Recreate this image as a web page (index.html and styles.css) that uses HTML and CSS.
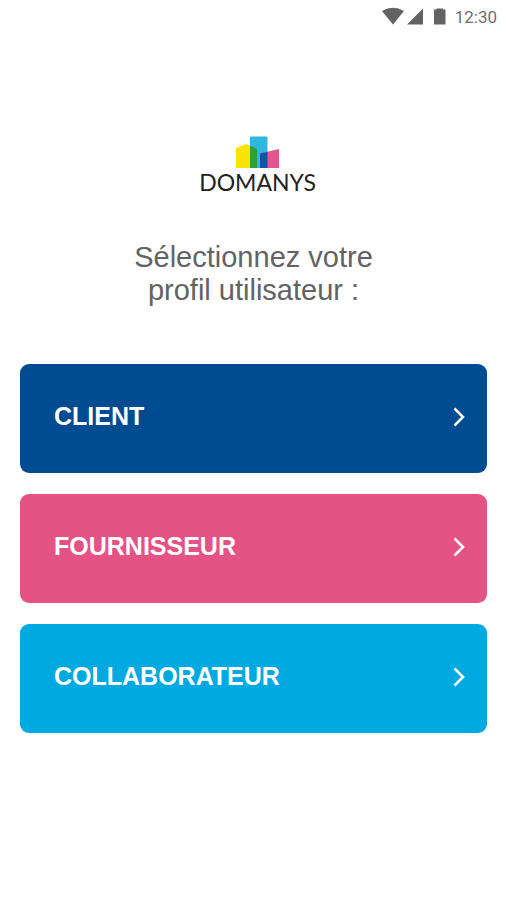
FILE: index.html
```html
<!DOCTYPE html>
<html lang="fr">
<head>
<meta charset="utf-8">
<meta name="viewport" content="width=device-width, initial-scale=1">
<title>Domanys</title>
<link rel="stylesheet" href="styles.css">
</head>
<body>
<header class="status">
  <svg class="status-icons" width="64" height="20" viewBox="0 0 64 20" aria-hidden="true">
    <path d="M0 4Q11 -2.500 22 4L11 17.500Z"/>
    <path d="M25 17.500L41 1.500V17.500Z"/>
    <path d="M52 2.500H54.500V1.500H61V2.500H63.500V17.500H52Z"/>
  </svg>
  <span>12:30</span>
</header>
<main class="screen">
  <div class="brand">
    <svg width="44" height="32" viewBox="0 0 44 32" aria-hidden="true">
      <path fill="#fbe300" d="M0 12L10 8L21 13V32H0Z"/>
      <path fill="#2fb8df" d="M14 1.500Q14 .5 15 .5H30.500Q31.500 .5 31.500 1.500V32H14Z"/>
      <path fill="#e75490" d="M24 17.500L43 13V32H24Z"/>
      <path fill="#2f9e37" d="M14 9.800L21 13V32H14Z"/>
      <path fill="#0c56a5" d="M24 17.500L31.500 15.700V32H24Z"/>
    </svg>
    <span class="brand-name">DOMANYS</span>
  </div>
  <h1 class="title">Sélectionnez votre<br>profil utilisateur :</h1>
  <nav class="profiles">
    <button class="profile client" type="button">CLIENT<svg class="chevron" viewBox="0 0 12 20" aria-hidden="true"><path d="M1.500 1.500L10 10L1.500 18.500"/></svg></button>
    <button class="profile supplier" type="button">FOURNISSEUR<svg class="chevron" viewBox="0 0 12 20" aria-hidden="true"><path d="M1.500 1.500L10 10L1.500 18.500"/></svg></button>
    <button class="profile staff" type="button">COLLABORATEUR<svg class="chevron" viewBox="0 0 12 20" aria-hidden="true"><path d="M1.500 1.500L10 10L1.500 18.500"/></svg></button>
  </nav>
</main>
</body>
</html>
```
FILE: styles.css
```css
* { box-sizing: border-box; }

body {
  margin: 0;
  min-height: 100vh;
  background: #fefefe;
  font-family: "Liberation Sans", Arial, sans-serif;
}

.status {
  display: flex;
  justify-content: flex-end;
  align-items: center;
  gap: 9px;
  padding: 6px 9px 0 0;
  color: #707070;
  font: 17px/22px Roboto, sans-serif;
}

.status-icons { fill: #626262; }

.screen { padding: 108px 19px 0 20px; }

.brand {
  display: flex;
  flex-direction: column;
  align-items: center;
  gap: 1px;
  padding-left: 8px;
}

.brand-name {
  color: #222;
  font: 23px/27px Lato, sans-serif;
}

.title {
  margin: 45px 0 57px;
  color: #636363;
  font-size: 29px;
  font-weight: 400;
  line-height: 33px;
  text-align: center;
}

.profiles {
  display: grid;
  gap: 21px;
}

.profile {
  display: flex;
  align-items: center;
  justify-content: space-between;
  width: 100%;
  padding: 38px 22px 42px 34px;
  border: 0;
  border-radius: 9px;
  color: #fff;
  font: bold 25px/29px "Liberation Sans", Arial, sans-serif;
  text-align: left;
}

.client { background: #004c93; }
.supplier { background: #e45384; }
.staff { background: #00aae0; }

.chevron {
  width: 12px;
  height: 20px;
  fill: none;
  stroke: #fff;
  stroke-width: 2.5;
}
```
